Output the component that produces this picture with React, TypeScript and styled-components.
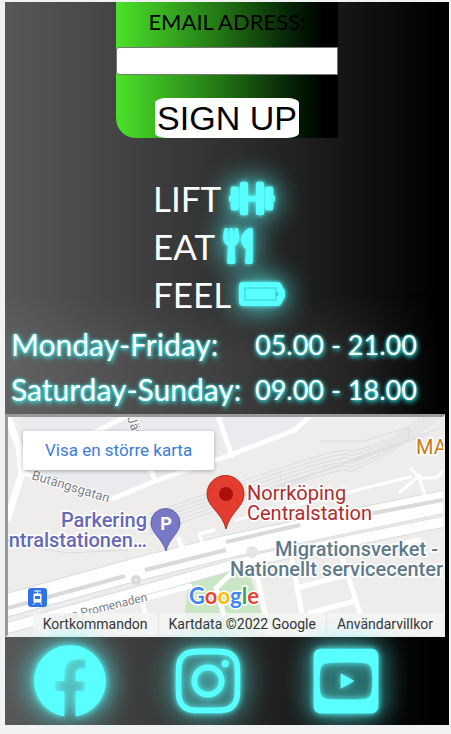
import React from "react";
import styled, { createGlobalStyle } from "styled-components";
import { FaDumbbell, FaUtensils, FaFacebook, FaInstagram, FaYoutubeSquare } from "react-icons/fa";

const GlobalStyle = createGlobalStyle`
  * { box-sizing: border-box; }
  body { margin: 0; background: #f1f2f3; font-family: Lato, sans-serif; }
`;

const cyan = "#59ffff";

const Page = styled.main`
  margin: 2px 2px 8px 5px;
  background: linear-gradient(90deg, #585858, #303030 50%, #000 98%);
  overflow: hidden;
`;

const SignUpForm = styled.form`
  display: flex;
  flex-direction: column;
  align-items: center;
  width: 50%;
  margin: 0 auto;
  border-bottom-left-radius: 20px;
  background: linear-gradient(90deg, #4be22a, #247a15 45%, #041f06 80%, #000 94%);
`;

const EmailLabel = styled.label`
  font-size: 22px;
  line-height: 40px;
  color: #000;
  white-space: nowrap;
`;

const EmailInput = styled.input`
  width: 100%;
  height: 28px;
  margin: 5px 0 23px;
  border: 1px solid #767676;
  border-radius: 3px 0 0 3px;
  background: #fff;
  font-size: 20px;
`;

const SignUpButton = styled.button`
  height: 40px;
  padding: 0 2px;
  border: 0;
  border-radius: 12px / 5px;
  background: #fff;
  color: #000;
  font: 34px/40px "Liberation Sans", sans-serif;
  white-space: nowrap;
`;

const Mottos = styled.ul`
  position: relative;
  z-index: 1;
  width: 148px;
  margin: 36px auto 0;
  padding: 0;
  list-style: none;
`;

const Motto = styled.li`
  display: flex;
  align-items: center;
  gap: 8px;
  height: 48px;
  color: #fff;
  font-size: 35px;
  white-space: nowrap;

  svg {
    flex: none;
    color: ${cyan};
    filter: drop-shadow(0 0 2px ${cyan}) drop-shadow(0 0 14px ${cyan});
  }
`;

const DumbbellIcon = styled(FaDumbbell)`
  width: 46px;
  height: 37px;
  stroke: ${cyan};
  stroke-width: 16;
`;

const UtensilsIcon = styled(FaUtensils)`
  width: 30px;
  height: 36px;
  stroke: ${cyan};
  stroke-width: 8;
`;

const HoursPanel = styled.section`
  position: relative;
  padding: 4px 6px 2px;

  &::before {
    content: "";
    position: absolute;
    inset: -24px 0 0;
    background: linear-gradient(90deg, #626262, #3f3f3f 50%, #222 80%, #000 98%);
    mask-image: linear-gradient(transparent, #000 60px);
    pointer-events: none;
  }
`;

const HoursTable = styled.table`
  position: relative;
  border-collapse: collapse;
  color: #fff;
  font-size: 30px;
  line-height: 45px;
  text-shadow: 0 0 3px #3ff, 1px 2px 5px #3ff;

  th, td { padding: 0; text-align: left; font-weight: 400; white-space: nowrap; }
  th { width: 244px; }
  td { font-size: 27px; }
`;

const MapFrame = styled.section`
  position: relative;
  height: 223px;
  margin-right: 4px;
  border: solid;
  border-width: 3px 2px 2px 3px;
  border-color: #999 #eee #eee #999;
  background: #eeedec;
  overflow: hidden;
`;

const MapDrawing = styled.svg`
  display: block;
  width: 100%;
  height: 100%;
  font-family: Roboto, sans-serif;
`;

const LargerMapLink = styled.a`
  position: absolute;
  top: 14px;
  left: 15px;
  padding: 0 22px;
  border-radius: 2px;
  background: #fff;
  box-shadow: 0 1px 4px rgba(0, 0, 0, 0.3);
  color: #3c7bd9;
  font: 17px/39px Roboto, sans-serif;
  text-decoration: none;
`;

const Credits = styled.div`
  position: absolute;
  right: 0;
  bottom: 0;
  display: flex;
  background: rgba(245, 245, 245, 0.85);
  color: #333;
  font: 14px/22px Roboto, sans-serif;
`;

const creditPart = `
  padding: 0 10px;
  border: 0;
  background: none;
  color: inherit;
  font: inherit;
  text-decoration: none;
  white-space: nowrap;
`;
const CreditButton = styled.button`${creditPart}`;
const CreditText = styled.span`${creditPart} border-left: 1px solid #e4e4e4;`;
const CreditLink = styled.a`${creditPart} border-left: 1px solid #e4e4e4;`;

const Social = styled.nav`
  display: flex;
  justify-content: space-between;
  padding: 7px 66px 7px 28px;
  background: linear-gradient(90deg, #585858, #303030 45%, #0c0c0c 80%, #000 98%);
`;

const SocialLink = styled.a`
  display: flex;
  color: ${cyan};
  filter: drop-shadow(0 0 3px ${cyan}) drop-shadow(0 0 14px ${cyan});

  svg { width: auto; height: 74px; }
`;

const Battery = () => (
  <svg width="46" height="24" viewBox="0 0 46 24" aria-hidden="true">
    <path d="M4 0h34q4 0 5 4l3 5v6l-3 5q-1 4-5 4H4q-4 0-4-4V4q0-4 4-4z" fill="currentColor" />
    <rect x="6" y="6" width="31" height="12" fill="none" stroke="#35caca" />
    <rect x="37" y="10" width="2" height="4" fill="#35caca" />
  </svg>
);

const rails = [0, 4, 8, 12, 16, 20];

const CityMap = () => (
  <MapDrawing viewBox="8 417 435 218" preserveAspectRatio="xMidYMid slice" role="img" aria-label="Norrköping Centralstation">
    <rect x="-400" y="417" width="1300" height="218" fill="#eeedec" />
    <path d="M20 417H312L295 430 155 480 110 500 24 474z" fill="#eaebee" />
    <path d="M189 579L224 569 250 575 262 614 270 635H192L185 611z" fill="#c9e6c5" />
    <g fill="none" stroke="#d9dce0" strokeWidth="1">
      {rails.map((d) => (
        <path key={d} d={`M150 ${514 + d}Q210 ${492 + d} 281 ${468 + d}T350 ${452 + d}Q400 ${440 + d / 2} ${420 + d} 417`} />
      ))}
      <path d="M320 441h44l46-14M8 543l60 10 60-3M240 500l190-66M260 494l180-66" />
      <path d="M281 471v9M325 461v9M369 446v10M409 425v12" />
    </g>
    <g fill="none" stroke="#d8dbe1" strokeLinecap="round">
      <path d="M8 605L130 571 230 546 443 502" strokeWidth="24" />
      <path d="M8 628L130 594 240 563 443 522" strokeWidth="12" />
    </g>
    <g fill="none" stroke="#fff" strokeLinecap="round" strokeLinejoin="round">
      <path d="M8 418L19 447 22 472 8 518" strokeWidth="7" />
      <path d="M24 473L50 482M112 499L155 481 225 457 295 430 311 415M93 433L125 417M148 464l7 16M218 416l14 40" strokeWidth="5" />
      <path d="M8 605L130 571 230 546 443 502" strokeWidth="22" />
      <path d="M8 628L130 594 240 563 443 522" strokeWidth="10" />
      <path d="M132 564v8M179 539l3 9M139 594l14 41M143 599l47-13" strokeWidth="5" />
      <path d="M252 553l18 82M292 560l14 75M297 588l60-16M341 554l26 81M310 613l45-12M359 554l60-14M216 588l15-14M216 588l8 28" strokeWidth="5" />
      <path d="M425 497l-6-20-8-8M416 478h20l8-8M235 520l65-16 110-27M400 492l20-17M203 545l-4-11 15-4" strokeWidth="3" />
    </g>
    <g fill="none" stroke="#dadada" strokeWidth="4">
      <path d="M8 608L125 576M145 570L226 550M226 542L300 525M342 519L443 500" />
      <circle cx="136" cy="580" r="3" />
    </g>
    <circle cx="252" cy="552" r="6" fill="#e4e5e7" />

    <g fill="#7d8086" stroke="#fff" strokeWidth="2" paintOrder="stroke" fontSize="13">
      <text transform="translate(31 479) rotate(17)">Butängsgatan</text>
      <text transform="translate(127 418) rotate(70)">Järv</text>
      <text transform="translate(50 625) rotate(-14)" fontSize="12">Norra Promenaden</text>
    </g>
    <g fontSize="20" fontWeight="500" stroke="#fff" strokeWidth="3" paintOrder="stroke">
      <g fill="#6568b8" textAnchor="end">
        <text x="147" y="527">Parkering</text>
        <text x="147" y="547">Centralstationen…</text>
      </g>
      <g fill="#b02b2b" fontWeight="400">
        <text x="247" y="500">Norrköping</text>
        <text x="247" y="520">Centralstation</text>
      </g>
      <g fill="#60798a" textAnchor="end">
        <text x="438" y="556">Migrationsverket -</text>
        <text x="443" y="576">Nationellt servicecenter</text>
      </g>
      <text x="416" y="454" fill="#cd7814" fontWeight="400">MAX</text>
    </g>

    <path d="M166 551C162 538 151 533 151 523a14.500 14.500 0 0 1 29 0C180 533 169 538 166 551z" fill="#7779c7" stroke="#5f62ae" />
    <text x="166" y="530" textAnchor="middle" fontSize="18" fontWeight="700" fill="#fff">P</text>
    <path d="M226 529C222 512 207 507 207 494a18.500 18.500 0 0 1 37 0C244 507 230 512 226 529z" fill="#e33d30" stroke="#b52a22" />
    <circle cx="226" cy="494" r="7" fill="#ad0f0b" />

    <rect x="28" y="588" width="19" height="19" rx="3" fill="#2f73e8" />
    <path d="M34 591h7M37.500 591v3" stroke="#fff" />
    <path d="M34 594h7v8h-7zM35 602l-2 3M40 602l2 3" fill="#fff" stroke="#fff" />
    <path d="M35 596h5v3h-5z" fill="#2f73e8" />

    <text x="189" y="604" fontFamily="Lato, sans-serif" fontSize="22" fontWeight="700" stroke="#fff" strokeWidth="3" paintOrder="stroke">
      <tspan fill="#4285f4">G</tspan><tspan fill="#ea4335">o</tspan><tspan fill="#fbbc05">o</tspan>
      <tspan fill="#4285f4">g</tspan><tspan fill="#34a853">l</tspan><tspan fill="#ea4335">e</tspan>
    </text>
  </MapDrawing>
);

export default function App() {
  return (
    <>
      <GlobalStyle />
      <Page>
        <SignUpForm onSubmit={(e) => e.preventDefault()}>
          <EmailLabel htmlFor="email">EMAIL ADRESS:</EmailLabel>
          <EmailInput id="email" type="email" />
          <SignUpButton type="submit">SIGN UP</SignUpButton>
        </SignUpForm>
        <Mottos>
          <Motto>LIFT <DumbbellIcon /></Motto>
          <Motto>EAT <UtensilsIcon /></Motto>
          <Motto>FEEL <Battery /></Motto>
        </Mottos>
        <HoursPanel>
          <HoursTable>
            <tbody>
              <tr><th scope="row">Monday-Friday:</th><td>05.00 - 21.00</td></tr>
              <tr><th scope="row">Saturday-Sunday:</th><td>09.00 - 18.00</td></tr>
            </tbody>
          </HoursTable>
        </HoursPanel>
        <MapFrame>
          <CityMap />
          <LargerMapLink href="#map">Visa en större karta</LargerMapLink>
          <Credits>
            <CreditButton type="button">Kortkommandon</CreditButton>
            <CreditText>Kartdata ©2022 Google</CreditText>
            <CreditLink href="#terms">Användarvillkor</CreditLink>
          </Credits>
        </MapFrame>
        <Social>
          <SocialLink href="#facebook" aria-label="Facebook"><FaFacebook /></SocialLink>
          <SocialLink href="#instagram" aria-label="Instagram"><FaInstagram /></SocialLink>
          <SocialLink href="#youtube" aria-label="YouTube"><FaYoutubeSquare /></SocialLink>
        </Social>
      </Page>
    </>
  );
}
